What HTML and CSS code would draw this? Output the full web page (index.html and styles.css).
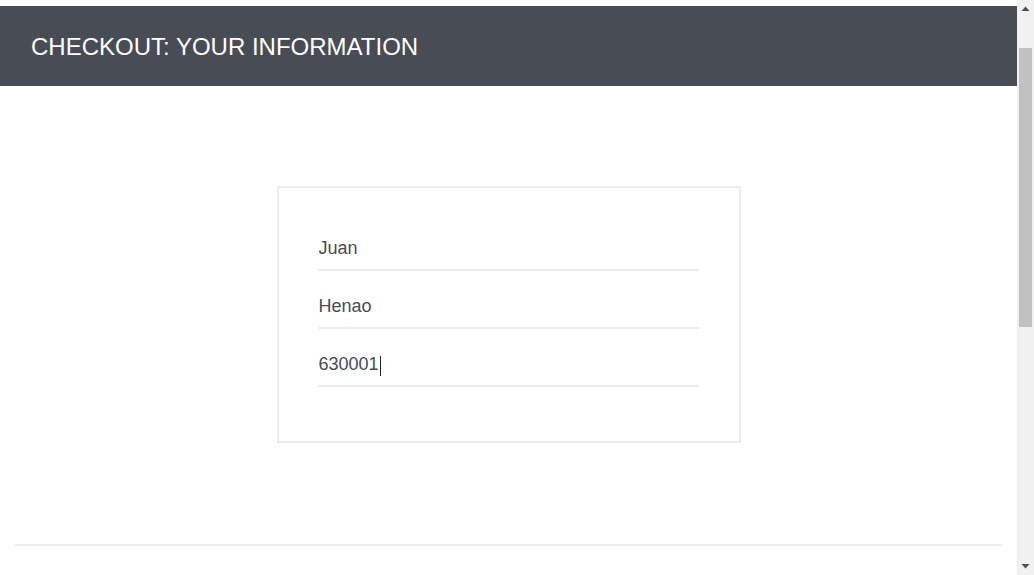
FILE: index.html
```html
<!DOCTYPE html>
<html lang="en">
<head>
<meta charset="utf-8">
<title>Checkout: Your Information</title>
<link rel="stylesheet" href="styles.css">
</head>
<body>
<div class="window">
  <div class="viewport">
    <div class="page">
      <div class="top-strip"></div>
      <div class="secondary-header">
        <span class="title">Checkout: Your Information</span>
      </div>
      <main class="checkout-info-wrapper">
        <form class="checkout-info">
          <input class="form-input" type="text" value="Juan" placeholder="First Name">
          <input class="form-input" type="text" value="Henao" placeholder="Last Name">
          <div class="input-wrap">
            <input class="form-input" type="text" value="630001" placeholder="Zip/Postal Code">
            <span class="caret"></span>
          </div>
        </form>
      </main>
      <div class="divider"></div>
    </div>
  </div>
  <div class="scrollbar" aria-hidden="true">
    <div class="sb-button">
      <svg width="17" height="17" viewBox="0 0 17 17"><path d="M4.5 11 L8.5 6.5 L12.5 11 Z" fill="#505050"/></svg>
    </div>
    <div class="sb-track">
      <div class="sb-thumb"></div>
    </div>
    <div class="sb-button">
      <svg width="17" height="17" viewBox="0 0 17 17"><path d="M4.5 6 L8.5 10.5 L12.5 6 Z" fill="#505050"/></svg>
    </div>
  </div>
</div>
</body>
</html>
```

FILE: styles.css
```css
html, body {
  margin: 0;
  padding: 0;
  height: 100%;
  overflow: hidden;
  background: #ffffff;
}

body {
  font-family: "Liberation Sans", Arial, sans-serif;
  color: #484c55;
}

.window {
  display: flex;
  height: 100vh;
}

.viewport {
  flex: 1;
  min-width: 0;
  overflow: hidden;
}

.page {
  display: flex;
  flex-direction: column;
}

.top-strip {
  height: 6px;
  background: #ffffff;
}

.secondary-header {
  height: 80px;
  background: #484c55;
  display: flex;
  align-items: center;
  padding-left: 31px;
}

.title {
  color: #ffffff;
  font-size: 24px;
  text-transform: uppercase;
  line-height: 1;
  margin-top: 2px;
}

.checkout-info-wrapper {
  display: flex;
  justify-content: center;
  padding: 100px 0 101px;
}

.checkout-info {
  width: 464px;
  box-sizing: border-box;
  border: 2px solid #ededed;
  padding: 38px 40px 54px 39px;
  display: flex;
  flex-direction: column;
  gap: 13px;
}

.input-wrap {
  position: relative;
}

.form-input {
  display: block;
  width: 100%;
  height: 45px;
  box-sizing: border-box;
  margin: 0;
  padding: 2px 0 0 1px;
  border: none;
  border-bottom: 2px solid #ededed;
  outline: none;
  background: transparent;
  font-family: "Liberation Sans", Arial, sans-serif;
  font-size: 18px;
  color: #484c55;
}

.caret {
  position: absolute;
  left: 62px;
  top: 14px;
  width: 1px;
  height: 20px;
  background: #222222;
}

.divider {
  height: 2px;
  background: #ededed;
  margin: 0 15px;
}

.scrollbar {
  width: 17px;
  flex: none;
  background: #f1f1f1;
  display: flex;
  flex-direction: column;
}

.sb-button {
  height: 17px;
  flex: none;
}

.sb-button svg {
  display: block;
}

.sb-track {
  flex: 1;
  padding: 31px 2px 0;
}

.sb-thumb {
  height: 279px;
  background: #c1c1c1;
}
```
